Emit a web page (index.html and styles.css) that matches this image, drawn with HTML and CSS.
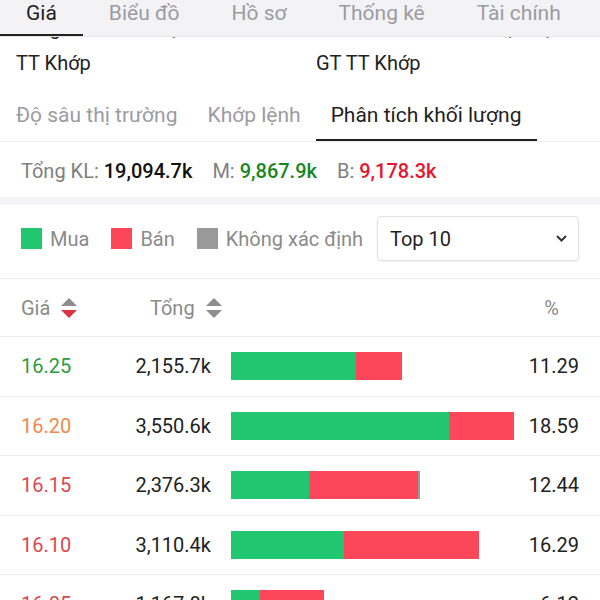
FILE: index.html
```html
<html>
<head>
<meta charset="utf-8">
<link rel="stylesheet" href="styles.css">
</head>
<body>
	<div id="top_tabs">
		<div class="top_tab active">Giá</div>
		<div class="top_tab">Biểu đồ</div>
		<div class="top_tab">Hồ sơ</div>
		<div class="top_tab">Thống kê</div>
		<div class="top_tab">Tài chính</div>
	</div>

	<section id="info">
		<div class="info_label">Tổng KL</div>
		<div class="info_value">19,094.7k</div>
		<div class="info_label">KL TB</div>
		<div class="info_value right">296,515,000</div>
		<div class="info_label">TT Khớp</div>
		<div class="info_value"></div>
		<div class="info_label">GT TT Khớp</div>
		<div class="info_value right"></div>
	</section>

	<div id="sub_tabs">
		<div class="sub_tab">Độ sâu thị trường</div>
		<div class="sub_tab">Khớp lệnh</div>
		<div class="sub_tab active">Phân tích khối lượng</div>
	</div>

	<div id="summary">
		<span class="sum_label">Tổng KL:</span> <span class="sum_value">19,094.7k</span>
		<span class="sum_label gap">M:</span> <span class="sum_value buy">9,867.9k</span>
		<span class="sum_label gap">B:</span> <span class="sum_value sell">9,178.3k</span>
	</div>

	<div id="legend">
		<div class="legend_item"><span class="swatch buy_bg"></span>Mua</div>
		<div class="legend_item"><span class="swatch sell_bg"></span>Bán</div>
		<div class="legend_item last"><span class="swatch none_bg"></span>Không xác định</div>
		<div class="select_box">
			<span>Top 10</span>
			<svg width="11" height="7" viewBox="0 0 11 7"><polyline points="1,1 5.5,5.5 10,1" fill="none" stroke="#333" stroke-width="2"/></svg>
		</div>
	</div>

	<div class="row head">
		<div class="col_price">Giá
			<svg class="sort" width="16" height="20" viewBox="0 0 16 20"><polygon points="0,8 8,0 16,8" fill="#8e8e8e"/><polygon points="0,12 16,12 8,20" fill="#d8333e"/></svg>
		</div>
		<div class="col_total_head">Tổng
			<svg class="sort" width="16" height="20" viewBox="0 0 16 20"><polygon points="0,8 8,0 16,8" fill="#8e8e8e"/><polygon points="0,12 16,12 8,20" fill="#8e8e8e"/></svg>
		</div>
		<div class="col_pct_head">%</div>
	</div>

	<div class="row">
		<div class="col_price up">16.25</div>
		<div class="col_total">2,155.7k</div>
		<div class="col_bar"><div class="bar"><span class="buy_bg" style="width:125px"></span><span class="sell_bg" style="width:46px"></span></div></div>
		<div class="col_pct">11.29</div>
	</div>
	<div class="row">
		<div class="col_price ref">16.20</div>
		<div class="col_total">3,550.6k</div>
		<div class="col_bar"><div class="bar"><span class="buy_bg" style="width:218px"></span><span class="sell_bg" style="width:65px"></span></div></div>
		<div class="col_pct">18.59</div>
	</div>
	<div class="row">
		<div class="col_price down">16.15</div>
		<div class="col_total">2,376.3k</div>
		<div class="col_bar"><div class="bar"><span class="buy_bg" style="width:78px"></span><span class="sell_bg" style="width:109px"></span><span class="none_bg" style="width:2px"></span></div></div>
		<div class="col_pct">12.44</div>
	</div>
	<div class="row">
		<div class="col_price down">16.10</div>
		<div class="col_total">3,110.4k</div>
		<div class="col_bar"><div class="bar"><span class="buy_bg" style="width:113px"></span><span class="sell_bg" style="width:135px"></span></div></div>
		<div class="col_pct">16.29</div>
	</div>
	<div class="row">
		<div class="col_price down">16.05</div>
		<div class="col_total">1,167.8k</div>
		<div class="col_bar"><div class="bar"><span class="buy_bg" style="width:29px"></span><span class="sell_bg" style="width:64px"></span></div></div>
		<div class="col_pct">6.12</div>
	</div>
</body>
</html>
```

FILE: styles.css
```css
*
{
	font-family: Roboto, "Noto Sans", sans-serif;
	box-sizing: border-box;
}

body
{
	margin: 0;
	padding: 12px 0 0 0;
	border: 0;
	color: #222;
	font-size: 20px;
	background: #fff;
	overflow: hidden;
}

/* top tab bar sits over the scrolled content */
#top_tabs
{
	position: absolute;
	top: 0;
	left: 0;
	right: 0;
	height: 37px;
	display: flex;
	background: #f3f3f5;
	border-bottom: 1px solid #e4e4e6;
	z-index: 2;
}

.top_tab
{
	padding: 0 26px 7px 26px;
	line-height: 27px;
	font-size: 21px;
	color: #9b9ba3;
	border-bottom: 2px solid transparent;
	height: 36px;
}

.top_tab.active
{
	color: #1f1f1f;
	border-bottom-color: #222;
}

#info
{
	display: grid;
	grid-template-columns: 134px 166px 1fr auto;
	row-gap: 3px;
	padding: 0 16px;
	line-height: 32px;
}

.info_value.right
{
	text-align: right;
}

#sub_tabs
{
	display: flex;
	padding-left: 1px;
	border-bottom: 1px solid #ececec;
}

.sub_tab
{
	padding: 24px 15px 12px 15px;
	line-height: 24px;
	font-size: 21px;
	color: #9b9ba3;
	border-bottom: 2px solid transparent;
}

.sub_tab.active
{
	color: #1f1f1f;
	border-bottom-color: #222;
}

#summary
{
	padding: 17px 21px 14px 21px;
	line-height: 24px;
	border-bottom: 8px solid #f4f4f6;
}

.sum_label
{
	color: #808080;
}

.sum_label.gap
{
	margin-left: 15px;
}

.sum_value
{
	font-weight: 500;
	color: #111;
}

.sum_value.buy
{
	color: #17861f;
}

.sum_value.sell
{
	color: #e8142e;
}

#legend
{
	display: flex;
	align-items: center;
	padding: 11px 21px 17px 21px;
	border-bottom: 1px solid #ececec;
}

.legend_item
{
	display: flex;
	align-items: center;
	color: #8a8a8a;
	margin-right: 22px;
	white-space: nowrap;
	flex-shrink: 0;
}

.legend_item.last
{
	margin-right: 10px;
}

.swatch
{
	display: inline-block;
	width: 21px;
	height: 21px;
	margin-right: 8px;
}

.buy_bg
{
	background: #22c671;
}

.sell_bg
{
	background: #fb4759;
}

.none_bg
{
	background: #999;
}

.select_box
{
	margin-left: auto;
	flex-shrink: 0;
	width: 202px;
	height: 45px;
	border: 1px solid #e0e0e0;
	border-radius: 4px;
	box-shadow: 0 1px 2px rgba(0,0,0,0.06);
	display: flex;
	align-items: center;
	justify-content: space-between;
	padding: 0 11px 0 12px;
	color: #1f1f1f;
}

.row
{
	display: flex;
	align-items: center;
	height: 59.5px;
	padding: 0 21px;
	border-bottom: 1px solid #ececec;
}

.row.head
{
	height: 58px;
	color: #8a8a8a;
}

.col_price
{
	width: 90px;
	display: flex;
	align-items: center;
}

.col_price.up
{
	color: #2e9a3f;
}

.col_price.ref
{
	color: #f2884d;
}

.col_price.down
{
	color: #de4650;
}

.col_total
{
	width: 100px;
	text-align: right;
}

.col_total_head
{
	margin-left: 39px;
	display: flex;
	align-items: center;
}

.sort
{
	margin-left: 11px;
}

.col_bar
{
	width: 283px;
	margin-left: 20px;
}

.bar
{
	display: flex;
	height: 28px;
}

.bar span
{
	display: block;
	height: 28px;
}

.col_pct
{
	flex: 1;
	text-align: right;
}

.col_pct_head
{
	margin-left: auto;
	padding-right: 20px;
}
```
